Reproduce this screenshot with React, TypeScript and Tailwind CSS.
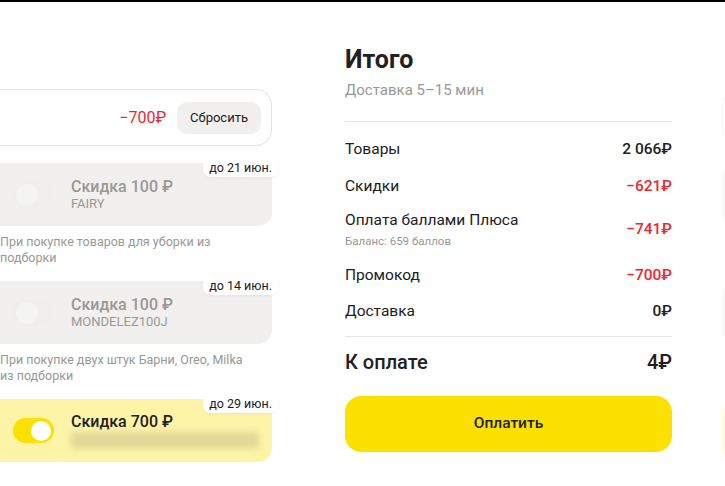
import React from "react";

const RED = "text-[#f0262d]";

function Badge({ text }: { text: string }) {
  return (
    <span className="absolute right-[-6px] top-[-4px] rounded-[7px] bg-white px-[6px] py-[1px] text-[12.5px] leading-[16px] text-[#21201f] shadow-[0_1px_3px_rgba(0,0,0,0.06)]">
      {text}
    </span>
  );
}

function Toggle({ on }: { on: boolean }) {
  return on ? (
    <div className="flex h-[25px] w-[41px] shrink-0 items-center justify-end rounded-full bg-[#fce000] px-[3px]">
      <div className="h-[20px] w-[20px] rounded-full bg-white" />
    </div>
  ) : (
    <div className="flex h-[25px] w-[41px] shrink-0 items-center rounded-full bg-[#f0efee] px-[3px]">
      <div className="h-[22px] w-[22px] rounded-full bg-[#f4f4f3]" />
    </div>
  );
}

interface Coupon {
  title: string;
  code: string;
  until: string;
  active: boolean;
  note?: string;
}

const coupons: Coupon[] = [
  { title: "Скидка 100 ₽", code: "FAIRY", until: "до 21 июн.", active: false, note: "При покупке товаров для уборки из подборки" },
  { title: "Скидка 100 ₽", code: "MONDELEZ100J", until: "до 14 июн.", active: false, note: "При покупке двух штук Барни, Oreo, Milka из подборки" },
  { title: "Скидка 700 ₽", code: "", until: "до 29 июн.", active: true },
];

function CouponCard({ c }: { c: Coupon }) {
  return (
    <div>
      <div
        className={
          "relative flex h-[63px] items-center rounded-r-[14px] pl-[13px] " +
          (c.active ? "bg-[#fef4a8]" : "bg-[#f1f0ef]")
        }
      >
        <Badge text={c.until} />
        <Toggle on={c.active} />
        <div className="ml-[17px] flex flex-col">
          {c.active ? (
            <>
              <span className="text-[16px] leading-[19px] font-medium text-[#21201f]">{c.title}</span>
              <div className="mt-[1px] h-[17px] w-[188px] rounded-[3px] bg-[#e3d897] blur-[3px]" />
            </>
          ) : (
            <>
              <span className="text-[16px] leading-[19px] font-medium text-[#9a9895]">{c.title}</span>
              <span className="text-[13px] leading-[16px] text-[#9a9895]">{c.code}</span>
            </>
          )}
        </div>
      </div>
      {c.note && (
        <p className="mt-[8px] mb-[-2px] w-[255px] text-[12.5px] leading-[16px] text-[#9a9895]">{c.note}</p>
      )}
    </div>
  );
}

function LeftColumn() {
  return (
    <div className="flex w-[272px] shrink-0 flex-col pt-[87px]">
      <div className="flex h-[57px] items-center justify-end gap-[11px] rounded-r-[16px] border border-l-0 border-[#e6e5e3] pr-[10px]">
        <span className={"text-[16px] " + RED}>−700₽</span>
        <button className="h-[32px] rounded-[10px] bg-[#f1f0ef] px-[13px] text-[13px] text-[#21201f]">
          Сбросить
        </button>
      </div>
      <div className="mt-[17px] flex flex-col gap-[17px]">
        <CouponCard c={coupons[0]} />
        <CouponCard c={coupons[1]} />
        <CouponCard c={coupons[2]} />
      </div>
    </div>
  );
}

function Row({ label, value, red, sub }: { label: string; value: string; red?: boolean; sub?: string }) {
  return (
    <div className="flex items-center justify-between">
      <div className="flex flex-col">
        <span className="text-[15.5px] leading-[20px] text-[#21201f]">{label}</span>
        {sub && <span className="mt-[4px] text-[11.5px] leading-[14px] text-[#9a9895]">{sub}</span>}
      </div>
      <span className={"text-[15.5px] leading-[20px] font-medium " + (red ? RED : "text-[#21201f]")}>{value}</span>
    </div>
  );
}

function Summary() {
  return (
    <div className="flex w-[327px] shrink-0 flex-col pt-[43px]">
      <h1 className="text-[25px] leading-[30px] font-bold text-[#21201f]">Итого</h1>
      <p className="mt-[6px] text-[15px] leading-[18px] text-[#9a9895]">Доставка 5–15 мин</p>
      <div className="mt-[22px] h-px bg-[#e6e5e3]" />
      <div className="mt-[17px] flex flex-col">
        <Row label="Товары" value="2 066₽" />
        <div className="mt-[17px]">
          <Row label="Скидки" value="−621₽" red />
        </div>
        <div className="mt-[14px]">
          <Row label="Оплата баллами Плюса" value="−741₽" red sub="Баланс: 659 баллов" />
        </div>
        <div className="mt-[17px]">
          <Row label="Промокод" value="−700₽" red />
        </div>
        <div className="mt-[16px]">
          <Row label="Доставка" value="0₽" />
        </div>
      </div>
      <div className="mt-[15px] h-px bg-[#e6e5e3]" />
      <div className="mt-[13px] flex items-center justify-between text-[20px] leading-[24px] font-medium text-[#21201f]">
        <span>К оплате</span>
        <span>4₽</span>
      </div>
      <button className="mt-[22px] h-[56px] w-full rounded-[16px] bg-[#fce000] text-[15.5px] font-medium text-[#21201f]">
        Оплатить
      </button>
    </div>
  );
}

function NextColumn() {
  // edge of the neighbouring column, cut off by the window
  return (
    <div className="flex w-[200px] shrink-0 flex-col pt-[87px] opacity-40">
      <div className="h-[57px] rounded-l-[16px] border border-[#e6e5e3]" />
      <div className="mt-[17px] h-[63px] rounded-l-[14px] bg-[#f1f0ef]" />
      <div className="mt-[56px] h-[63px] rounded-l-[14px] bg-[#f1f0ef]" />
      <div className="mt-[56px] h-[63px] rounded-l-[14px] bg-[#fef4a8]" />
    </div>
  );
}

export default function App() {
  return (
    <div
      className="flex h-[486px] w-[725px] overflow-hidden border-t-2 border-black bg-white"
      style={{ fontFamily: "Roboto, 'Noto Sans', sans-serif" }}
    >
      <LeftColumn />
      <div className="ml-[73px]">
        <Summary />
      </div>
      <div className="ml-[50px]">
        <NextColumn />
      </div>
    </div>
  );
}
